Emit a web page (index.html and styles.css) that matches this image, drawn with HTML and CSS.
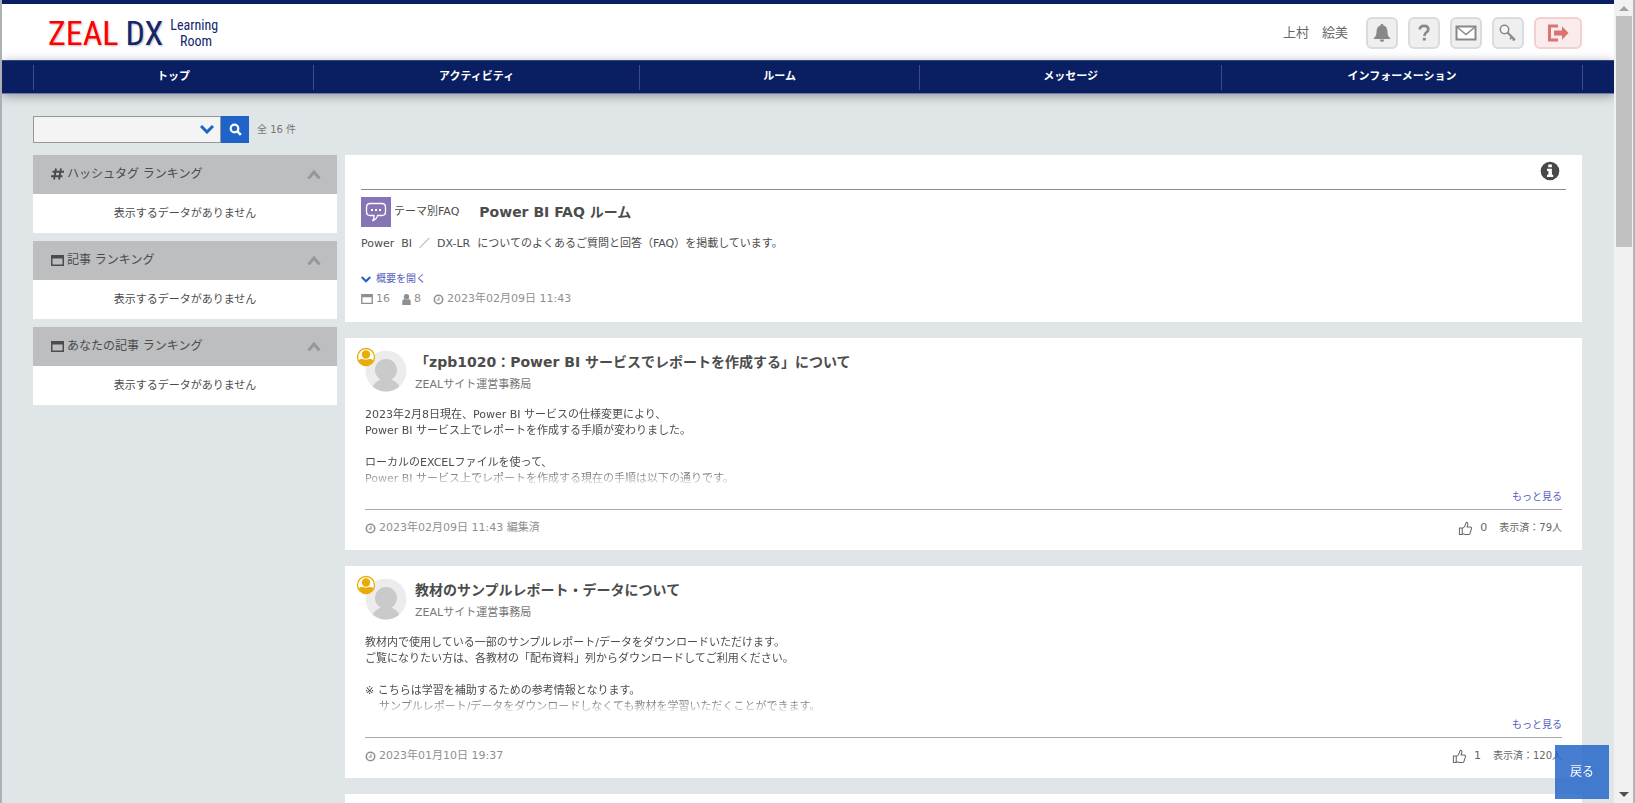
FILE: index.html
```html
<!DOCTYPE html>
<html lang="ja">
<head>
<meta charset="utf-8">
<title>ZEAL DX Learning Room</title>
<link rel="stylesheet" href="styles.css">
</head>
<body>
<svg class="sprite" aria-hidden="true">
  <symbol id="i-window" viewBox="0 0 13 11"><path fill="currentColor" fill-rule="evenodd" d="M0 0h13v11H0zM1.500 3.500v6h10v-6z"/></symbol>
  <symbol id="i-clock" viewBox="0 0 12 12"><circle cx="6" cy="6" r="4.600" fill="none" stroke="currentColor" stroke-width="1.700"/><path d="M6.500 3.200v3.300H4" fill="none" stroke="currentColor" stroke-width="1.100"/></symbol>
  <symbol id="i-up" viewBox="0 0 14 9"><path d="M1.500 8.500 7 2l5.500 6.500" fill="none" stroke="currentColor" stroke-width="3"/></symbol>
  <symbol id="i-down" viewBox="0 0 14 9"><path d="M1 1l6 6 6-6" fill="none" stroke="currentColor" stroke-width="3"/></symbol>
  <symbol id="i-thumb" viewBox="0 0 16 16"><path d="M1.500 7.500h3v6.800h-3zM4.500 8c2-.8 3-2.300 3.300-3.800.2-1.200.3-2.500 1.200-2.700 1.300-.2 1.700 1.100 1.500 2.300-.2 1-.6 1.800-.9 2.700H13c1.200 0 1.700.9 1.300 1.800l-1.500 4.800c-.3.900-.8 1.300-1.800 1.300H8c-1.500 0-2.200-.8-3.500-.9z" fill="none" stroke="currentColor" stroke-width="1.100" stroke-linejoin="round"/></symbol>
  <symbol id="i-user" viewBox="0 0 42 42"><clipPath id="c-user"><circle cx="21" cy="21" r="20.500"/></clipPath><circle cx="21" cy="21" r="20.500" fill="#ececec"/><g clip-path="url(#c-user)" fill="#cacaca"><circle cx="21" cy="20" r="11"/><ellipse cx="21" cy="40" rx="14" ry="11"/></g></symbol>
  <symbol id="i-owner" viewBox="0 0 20 20"><circle cx="10" cy="10" r="8.500" fill="#fff" stroke="#e9ab05" stroke-width="1.300"/><circle cx="10" cy="7.500" r="4.200" fill="#e9ab05"/><path d="M2.800 13.500c2-2.500 4.500-1.500 7.200-.8 2.700-.7 5.200-1.700 7.200.8-1.400 3-4 4.700-7.200 4.700s-5.800-1.700-7.200-4.700z" fill="#e9ab05"/></symbol>
</svg>
<div class="view">
  <div class="page">
    <header class="header">
      <a class="logo" href="#"><span class="logo-zeal">ZEAL</span><span class="logo-dx">DX</span><span class="logo-sub"><span>Learning</span><span class="logo-room">Room</span></span></a>
      <div class="tools">
        <span class="user-name">上村　絵美</span>
        <button class="tool" aria-label="通知"><svg width="18" height="20" viewBox="0 0 18 20"><path fill="#888" d="M9 1c1 0 1.500.6 1.500 1.500 2.800.8 3.800 2.900 3.900 5.500.1 4 .8 5.500 2.800 7v1H.8v-1c2-1.500 2.700-3 2.800-7 .1-2.600 1.100-4.700 3.900-5.500C7.500 1.600 8 1 9 1zM6.800 16.500h4.400C11 18 10.200 18.800 9 18.800S7 18 6.800 16.500z"/></svg></button>
        <button class="tool" aria-label="ヘルプ"><svg width="14" height="18" viewBox="0 0 14 18"><path d="M2.800 5.500C2.800 3 4.500 1.900 7 1.900s4.300 1.300 4.300 3.500C11.300 8.500 7.400 8 7.300 12" fill="none" stroke="#888" stroke-width="2.600"/><path fill="#888" d="M5.800 13.800h3v2.700h-3z"/></svg></button>
        <button class="tool" aria-label="メール"><svg width="22" height="16" viewBox="0 0 22 16"><path d="M1.500 1.500h19v13h-19z" fill="#fff" stroke="#888" stroke-width="2"/><path d="M2 2l9 7.500L20 2" fill="none" stroke="#888" stroke-width="1.500"/></svg></button>
        <button class="tool" aria-label="パスワード"><svg width="18" height="18" viewBox="0 0 18 18"><circle cx="5.500" cy="5.500" r="4.200" fill="#f6f6f6" stroke="#888" stroke-width="1.500"/><path d="M8.500 8.500l7.500 7.500" stroke="#888" stroke-width="2"/><path d="M13.500 12.500l-2.500 2.500M15.500 14.500l-1.800 2" stroke="#888" stroke-width="1.800"/></svg></button>
        <button class="tool tool-exit" aria-label="ログアウト"><svg width="22" height="18" viewBox="0 0 22 18"><path d="M11 2H2.500v14H11" fill="none" stroke="#d97474" stroke-width="3"/><path fill="#d97474" d="M7 6.500h8V2.300L21.500 9 15 15.700v-4.200H7z"/></svg></button>
      </div>
    </header>
    <nav class="nav">
      <a class="nav-item nav-m" href="#">トップ</a>
      <a class="nav-item nav-l" href="#">アクティビティ</a>
      <a class="nav-item nav-s" href="#">ルーム</a>
      <a class="nav-item nav-n" href="#">メッセージ</a>
      <a class="nav-item nav-xl" href="#">インフォーメーション</a>
    </nav>
    <div class="body">
      <form class="search">
        <div class="search-box">
          <input class="search-input" type="text" aria-label="検索">
          <button class="search-open" type="button" aria-label="検索条件を開く"><svg width="14" height="9"><use href="#i-down"/></svg></button>
        </div>
        <button class="search-go" type="button" aria-label="検索する"><svg width="13" height="13" viewBox="0 0 13 13"><circle cx="5.500" cy="5.500" r="3.800" fill="none" stroke="#fff" stroke-width="2.200"/><path d="M8.200 8.200l3.600 3.600" stroke="#fff" stroke-width="2.600"/></svg></button>
        <span class="search-total">全 16 件</span>
      </form>
      <div class="columns">
        <aside class="side">
          <section class="panel">
            <h2 class="panel-head"><svg width="13" height="12" viewBox="0 0 13 12"><path d="M5 .5 3 11.500M10 .5 8 11.500M1.500 3.700H13M0 8.300h11.500" stroke="currentColor" stroke-width="1.900"/></svg><span>ハッシュタグ ランキング</span><svg class="panel-arrow" width="14" height="9"><use href="#i-up"/></svg></h2>
            <p class="panel-body">表示するデータがありません</p>
          </section>
          <section class="panel">
            <h2 class="panel-head"><svg width="13" height="11"><use href="#i-window"/></svg><span>記事 ランキング</span><svg class="panel-arrow" width="14" height="9"><use href="#i-up"/></svg></h2>
            <p class="panel-body">表示するデータがありません</p>
          </section>
          <section class="panel">
            <h2 class="panel-head"><svg width="13" height="11"><use href="#i-window"/></svg><span>あなたの記事 ランキング</span><svg class="panel-arrow" width="14" height="9"><use href="#i-up"/></svg></h2>
            <p class="panel-body">表示するデータがありません</p>
          </section>
        </aside>
        <main class="main">
          <section class="card room">
            <div class="room-bar"><button class="info" aria-label="ルーム情報"><svg width="20" height="20" viewBox="0 0 20 20"><circle cx="10" cy="10" r="9.300" fill="#484848"/><path fill="#fff" d="M8.300 3.500h3.600v2.800H8.300zM7 7.800h4.900v6h1.300V16H7v-2.200h1.400V10H7z"/></svg></button></div>
            <div class="room-head">
              <svg class="room-icon" width="30" height="30" viewBox="0 0 30 30"><path fill="#8674b5" d="M0 0h30v30H0z"/><path d="M9 6.500h12q3.500 0 3.500 4v4q0 4-3.500 4h-4.500q-.5 3.500-5 5.500 2-2.500 1.500-5.500H9q-3.500 0-3.500-4v-4q0-4 3.500-4z" fill="none" stroke="#fff" stroke-width="1.300"/><path fill="#fff" d="M10 12h2v2h-2zM14 12h2v2h-2zM18 12h2v2h-2z"/></svg>
              <span class="room-type">テーマ別FAQ</span>
              <h1 class="title">Power BI FAQ ルーム</h1>
            </div>
            <p class="room-text">Power&nbsp; BI&nbsp; ／&nbsp; DX-LR&nbsp; についてのよくあるご質問と回答（FAQ）を掲載しています。</p>
            <a class="more room-more" href="#"><svg width="10" height="7" viewBox="0 0 14 9"><use href="#i-down"/></svg>概要を開く</a>
            <div class="meta room-meta">
              <span class="stat"><svg width="12" height="10"><use href="#i-window"/></svg>16</span>
              <span class="stat"><svg width="9" height="11" viewBox="0 0 9 11"><circle cx="4.500" cy="2.800" r="2.700" fill="currentColor"/><path fill="currentColor" d="M.3 11V7.500Q.3 5 2.500 5q2 1 4 0 2.200 0 2.200 2.500V11z"/></svg>8</span>
              <span class="stat"><svg width="11" height="11"><use href="#i-clock"/></svg>2023年02月09日 11:43</span>
            </div>
          </section>
          <article class="card post">
            <header class="post-head">
              <div class="avatar"><svg width="42" height="42"><use href="#i-user"/></svg><svg class="owner" width="20" height="20"><use href="#i-owner"/></svg></div>
              <div><h2 class="title">「zpb1020：Power BI サービスでレポートを作成する」について</h2><p class="author">ZEALサイト運営事務局</p></div>
            </header>
            <div class="post-text">2023年2月8日現在、Power BI サービスの仕様変更により、<br>Power BI サービス上でレポートを作成する手順が変わりました。<br><br>ローカルのEXCELファイルを使って、<br>Power BI サービス上でレポートを作成する現在の手順は以下の通りです。</div>
            <a class="more post-more" href="#">もっと見る</a>
            <footer class="post-foot meta">
              <span class="stat"><svg width="11" height="11"><use href="#i-clock"/></svg>2023年02月09日 11:43 編集済</span>
              <span class="seen"><button class="like"><svg width="15" height="15"><use href="#i-thumb"/></svg>0</button><span>表示済：79人</span></span>
            </footer>
          </article>
          <article class="card post">
            <header class="post-head">
              <div class="avatar"><svg width="42" height="42"><use href="#i-user"/></svg><svg class="owner" width="20" height="20"><use href="#i-owner"/></svg></div>
              <div><h2 class="title">教材のサンプルレポート・データについて</h2><p class="author">ZEALサイト運営事務局</p></div>
            </header>
            <div class="post-text">教材内で使用している一部のサンプルレポート/データをダウンロードいただけます。<br>ご覧になりたい方は、各教材の「配布資料」列からダウンロードしてご利用ください。<br><br>※ こちらは学習を補助するための参考情報となります。<br>&nbsp; &nbsp; サンプルレポート/データをダウンロードしなくても教材を学習いただくことができます。</div>
            <a class="more post-more" href="#">もっと見る</a>
            <footer class="post-foot meta">
              <span class="stat"><svg width="11" height="11"><use href="#i-clock"/></svg>2023年01月10日 19:37</span>
              <span class="seen"><button class="like"><svg width="15" height="15"><use href="#i-thumb"/></svg>1</button><span>表示済：120人</span></span>
            </footer>
          </article>
          <article class="card post"></article>
        </main>
      </div>
    </div>
  </div>
  <div class="scroll" aria-hidden="true">
    <svg class="scroll-arrow" width="10" height="5" viewBox="0 0 10 5"><path fill="#a3a3a3" d="M5 0l5 5H0z"/></svg>
    <div class="scroll-track"><div class="scroll-thumb"></div></div>
    <svg class="scroll-arrow" width="10" height="5" viewBox="0 0 10 5"><path fill="#505050" d="M0 0h10L5 5z"/></svg>
  </div>
</div>
<button class="back">戻る</button>
</body>
</html>
```

FILE: styles.css
```css
* { box-sizing: border-box; }
body, h1, h2, p { margin: 0; }
body {
  font: 11px/16px "DejaVu Sans", "Noto Sans CJK JP", sans-serif;
  color: #4c4c4c;
  background: #e0e5e8;
}
a { text-decoration: none; }
button { border: 0; padding: 0; background: none; font: inherit; color: inherit; }
svg { display: block; flex: none; }
.sprite { position: absolute; width: 0; height: 0; }

.view {
  display: flex;
  height: 100vh;
  overflow: hidden;
  border-left: 2px solid #adb0b4;
  border-right: 2px solid #b4b4b4;
}
.page { flex: 1; min-width: 0; overflow: hidden; border-top: 4px solid #0a1e62; }

.header {
  display: flex;
  justify-content: space-between;
  align-items: center;
  height: 56px;
  padding: 2px 32px 0 46px;
  background: #fff;
}
.logo {
  display: flex;
  align-items: center;
  gap: 7px;
  color: #14266b;
  font-family: "Roboto Condensed", Roboto, "Liberation Sans", sans-serif;
  font-size: 34px;
  line-height: 40px;
}
.logo-zeal { color: #f00; }
.logo-zeal, .logo-dx { text-shadow: 1px 1px 2px #bbb; }
.logo-sub { display: flex; flex-direction: column; align-items: flex-end; font-size: 14px; line-height: 16px; }
.logo-room { padding-right: 6px; }

.tools { display: flex; align-items: center; gap: 10px; }
.user-name { margin-right: 8px; font-size: 13px; color: #666; }
.tool {
  display: flex;
  align-items: center;
  justify-content: center;
  width: 32px;
  height: 32px;
  border: 2px solid #d9dcdc;
  border-radius: 6px;
  background: #efefef;
}
.tool-exit { width: 48px; border-color: #f3cfcf; background: #faecec; }

.nav {
  position: relative;
  display: flex;
  height: 34px;
  padding: 4px 31px 3px;
  border-top: 1px solid #36457f;
  border-bottom: 1px solid #6d7bab;
  background: #0a1e62;
  box-shadow: 0 2px 10px rgba(0, 0, 0, .35);
}
.nav-item {
  flex: 280 1 0;
  border-left: 1px solid #3b4b85;
  color: #fff;
  font-weight: bold;
  line-height: 24px;
  text-align: center;
}
.nav-l { flex-grow: 326; }
.nav-n { flex-grow: 302; }
.nav-xl { flex-grow: 361; border-right: 1px solid #3b4b85; }

.body { padding: 22px 32px 0 31px; }
.search { display: flex; align-items: center; margin-bottom: 12px; }
.search-box { display: flex; width: 188px; height: 27px; border: 1px solid #979797; background: #f4f4f4; }
.search-input { flex: 1; min-width: 0; border: 0; background: none; outline: 0; }
.search-open { padding: 0 6px; color: #1f62c8; }
.search-go { display: flex; align-items: center; justify-content: center; width: 28px; height: 27px; background: #1f62c8; }
.search-total { margin-left: 8px; font-size: 10px; color: #777; }

.columns { display: flex; gap: 8px; align-items: flex-start; }
.side { flex: 0 0 304px; display: grid; gap: 8px; }
.panel { background: #fff; }
.panel-head {
  display: flex;
  align-items: center;
  gap: 3px;
  height: 39px;
  padding: 0 16px 1px 18px;
  background: #bcbec0;
  font-size: 12px;
  font-weight: normal;
}
.panel-arrow { margin-left: auto; color: #979797; }
.panel-body { padding: 12px 0 11px; text-align: center; }

.main { flex: 1; min-width: 0; display: grid; gap: 16px; }
.card { background: #fff; }
.title { font-size: 14px; line-height: 24px; font-weight: bold; }
.meta { color: #8f8f8f; }
.more { display: flex; align-items: center; gap: 5px; color: #5560bd; font-size: 10px; }
.room-more svg { color: #1f62c8; }

.room { padding: 0 16px 15px; }
.room-bar { display: flex; justify-content: flex-end; padding: 6px 6px 8px; border-bottom: 1px solid #8c8c8c; }
.room-head { display: flex; align-items: center; margin-top: 7px; }
.room-type { margin: 0 20px 0 3px; }
.room-text { margin-top: 9px; }
.room-more { margin-top: 19px; }
.room-meta { display: flex; gap: 12px; margin-top: 4px; }
.stat { display: flex; align-items: center; gap: 3px; }

.post { padding: 12px 20px 14px; }
.post-head { display: flex; gap: 8px; }
.avatar { position: relative; }
.owner { position: absolute; left: -9px; top: -3px; }
.author { margin-top: 3px; color: #777; }
.post-text {
  height: 80px;
  margin-top: 14px;
  overflow: hidden;
  -webkit-mask-image: linear-gradient(#000 62px, transparent 80px);
  mask-image: linear-gradient(#000 62px, transparent 80px);
}
.post-more { justify-content: flex-end; margin-top: 2px; }
.post-foot {
  display: flex;
  justify-content: space-between;
  align-items: center;
  margin-top: 4px;
  padding-top: 10px;
  border-top: 1px solid #aaa;
}
.seen { display: flex; align-items: center; gap: 12px; color: #666; font-size: 10px; }
.like { display: flex; align-items: center; gap: 7px; font-size: 11px; }

.scroll { display: flex; flex-direction: column; align-items: center; width: 19px; padding: 6px 0; background: #f1f1f1; }
.scroll-track { flex: 1; width: 16px; padding: 5px 0; }
.scroll-thumb { height: 30%; background: #c1c1c1; }

.back {
  position: fixed;
  right: 26px;
  bottom: 4px;
  width: 54px;
  height: 54px;
  background: rgba(31, 98, 200, .82);
  color: #fff;
  font-size: 12px;
}
```
